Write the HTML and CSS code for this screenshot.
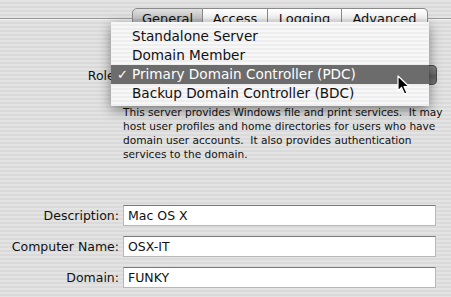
FILE: index.html
```html
<!DOCTYPE html>
<html>
<head>
<meta charset="utf-8">
<link rel="stylesheet" href="styles.css">
</head>
<body>
<div class="window">
  <div class="tabbar">
    <div class="tabs">
      <div class="tab tab-first selected">General</div>
      <div class="tab">Access</div>
      <div class="tab">Logging</div>
      <div class="tab tab-last">Advanced</div>
    </div>
  </div>

  <div class="row role-row">
    <div class="label">Role:</div>
    <div class="popup"></div>
  </div>

  <p class="desc">This server provides Windows file and print services.&nbsp; It may host user profiles and home directories for users who have domain user accounts.&nbsp; It also provides authentication services to the domain.</p>

  <div class="fields">
    <div class="row">
      <div class="label">Description:</div>
      <div class="field">Mac OS X</div>
    </div>
    <div class="row">
      <div class="label">Computer Name:</div>
      <div class="field">OSX-IT</div>
    </div>
    <div class="row">
      <div class="label">Domain:</div>
      <div class="field">FUNKY</div>
    </div>
  </div>

  <div class="menu">
    <div class="item">Standalone Server</div>
    <div class="item">Domain Member</div>
    <div class="item active"><span class="check">✓</span>Primary Domain Controller (PDC)</div>
    <div class="item">Backup Domain Controller (BDC)</div>
  </div>

  <svg class="cursor" width="14" height="20" viewBox="0 0 14 20">
    <path d="M1 1 L1 16 L4.5 12.5 L7.5 19 L10 18 L7 11.5 L12 11.5 Z" fill="#000" stroke="#fff" stroke-width="1.2" stroke-linejoin="round"/>
  </svg>
</div>
</body>
</html>
```

FILE: styles.css
```css
html, body {
  margin: 0;
  padding: 0;
}
body {
  width: 451px;
  height: 297px;
  overflow: hidden;
  background: repeating-linear-gradient(to bottom, #e3e3e3 0, #e3e3e3 2px, #dadada 2px, #dadada 4px);
  font-family: "DejaVu Sans", "Liberation Sans", sans-serif;
  color: #111;
}
.window {
  position: relative;
  width: 451px;
  height: 297px;
  padding-top: 8px;
  box-sizing: border-box;
}
.tabbar {
  height: 21px;
  background: linear-gradient(to bottom, transparent 0, transparent 10px, #9a9a9a 10px, #9a9a9a 11px, #f0f0f0 11px, #f0f0f0 12px, transparent 12px);
}
.tabs {
  display: flex;
  margin-left: 132px;
  width: 296px;
  height: 21px;
}
.tab {
  height: 21px;
  box-sizing: border-box;
  border: 1px solid #8a8a8a;
  border-left: none;
  background: linear-gradient(to bottom, #ffffff 0, #f2f2f2 50%, #e6e6e6 51%, #f3f3f3 100%);
  font-size: 13px;
  line-height: 20px;
  text-align: center;
}
.tab:nth-child(1) { width: 71px; }
.tab:nth-child(2) { width: 65px; }
.tab:nth-child(3) { width: 74px; }
.tab:nth-child(4) { width: 86px; }
.tab-first {
  border-left: 1px solid #8a8a8a;
  border-top-left-radius: 5px;
}
.tab-last {
  border-top-right-radius: 5px;
}
.tab.selected {
  background: linear-gradient(to bottom, #e0e0e0 0, #c4c4c4 50%, #b4b4b4 51%, #c8c8c8 100%);
}
.row {
  display: flex;
  align-items: center;
}
.label {
  width: 119px;
  text-align: right;
  font-size: 12.5px;
  padding-right: 4px;
}
.role-row {
  margin-top: 36px;
  height: 20px;
}
.popup {
  width: 314px;
  height: 20px;
  border-radius: 5px;
  background: linear-gradient(to bottom, #8a8a8a, #6a6a6a 50%, #606060 51%, #7a7a7a);
  box-shadow: inset 0 0 0 1px #4a4a4a;
}
.desc {
  margin: 20px 0 0 123px;
  width: 320px;
  font-size: 10.6px;
  line-height: 14px;
}
.fields {
  margin-top: 44px;
  display: flex;
  flex-direction: column;
  gap: 10px;
}
.field {
  width: 313px;
  height: 21px;
  box-sizing: border-box;
  background: #fff;
  border: 1px solid #b8b8b8;
  border-top-color: #7a7a7a;
  font-size: 12.5px;
  line-height: 19px;
  padding-left: 4px;
}
.menu {
  position: absolute;
  left: 111px;
  top: 22px;
  width: 318px;
  height: 84px;
  box-sizing: border-box;
  padding-top: 5px;
  background: repeating-linear-gradient(to bottom, #f7f7f7 0, #f7f7f7 2px, #eeeeee 2px, #eeeeee 4px);
  box-shadow: 0 4px 12px rgba(0,0,0,0.45);
}
.item {
  height: 19px;
  line-height: 19px;
  padding-left: 21px;
  font-size: 13.6px;
  position: relative;
}
.item.active {
  background: #6c6c6c;
  color: #fff;
}
.check {
  position: absolute;
  left: 6px;
  top: 0;
  font-size: 13px;
}
.cursor {
  position: absolute;
  left: 397px;
  top: 75px;
}
```
